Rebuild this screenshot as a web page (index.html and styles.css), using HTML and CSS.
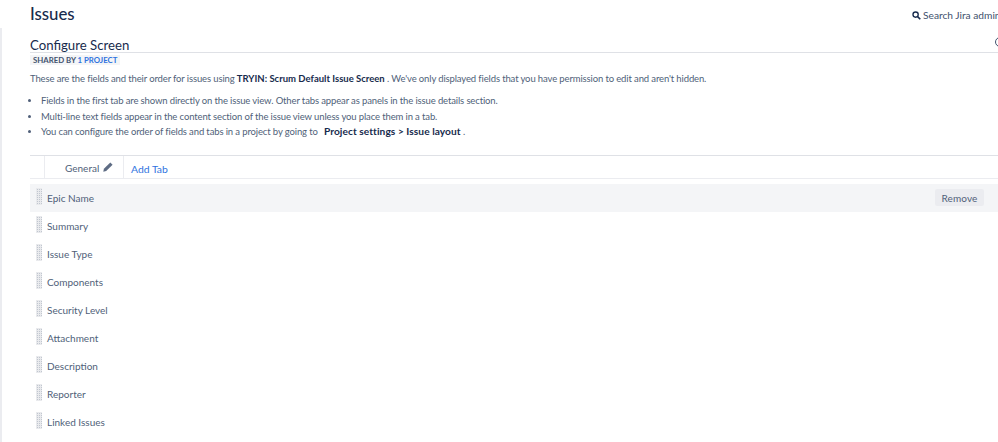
FILE: index.html
```html
<!DOCTYPE html>
<html lang="en">
<head>
<meta charset="utf-8">
<title>Configure Screen</title>
<link rel="stylesheet" href="styles.css">
</head>
<body>
<div class="shell">
  <aside class="rail"></aside>
  <main class="main">
    <header class="top">
      <h1 class="title">Issues</h1>
      <div class="search">
        <svg class="search-icon" width="9" height="9" viewBox="0 0 10 10" aria-hidden="true"><circle cx="4" cy="4" r="2.9" fill="none" stroke="#172b4d" stroke-width="1.5"/><path d="M6.2 6.2 9.2 9.2" stroke="#172b4d" stroke-width="1.8"/></svg>
        <span class="search-text">Search Jira admin</span>
      </div>
    </header>
    <section class="heading">
      <h2 class="subtitle">Configure Screen</h2>
      <span class="help"></span>
    </section>
    <div class="shared">SHARED BY <a class="shared-link">1 PROJECT</a></div>
    <p class="intro">These are the fields and their order for issues using <b>TRYIN: Scrum Default Issue Screen</b> . We've only displayed fields that you have permission to edit and aren't hidden.</p>
    <ul class="notes">
      <li>Fields in the first tab are shown directly on the issue view. Other tabs appear as panels in the issue details section.</li>
      <li>Multi-line text fields appear in the content section of the issue view unless you place them in a tab.</li>
      <li>You can configure the order of fields and tabs in a project by going to <b>Project settings &gt; Issue layout</b> .</li>
    </ul>
    <nav class="tabs">
      <div class="tab">General
        <svg class="pencil" width="10" height="10" viewBox="0 0 10 10" aria-hidden="true"><path d="M7.3.4 9.6 2.7 3.2 9.1.3 9.7.9 6.8Z" fill="#5e6c84"/></svg>
      </div>
      <a class="add-tab">Add Tab</a>
    </nav>
    <div class="fields">
      <div class="field field-active"><span class="grip"></span><span class="name">Epic Name</span><button class="remove">Remove</button></div>
      <div class="field"><span class="grip"></span><span class="name">Summary</span></div>
      <div class="field"><span class="grip"></span><span class="name">Issue Type</span></div>
      <div class="field"><span class="grip"></span><span class="name">Components</span></div>
      <div class="field"><span class="grip"></span><span class="name">Security Level</span></div>
      <div class="field"><span class="grip"></span><span class="name">Attachment</span></div>
      <div class="field"><span class="grip"></span><span class="name">Description</span></div>
      <div class="field"><span class="grip"></span><span class="name">Reporter</span></div>
      <div class="field"><span class="grip"></span><span class="name">Linked Issues</span></div>
    </div>
  </main>
</div>
</body>
</html>
```
FILE: styles.css
```css
* { box-sizing: border-box; }
html, body { margin: 0; height: 442px; overflow: hidden; background: #fff; }
body { font-family: "Lato", "Open Sans", sans-serif; font-size: 9.5px; letter-spacing: -0.13px; color: #505f79; }
.shell { display: flex; height: 442px; }
.rail { width: 2px; margin-top: 28px; background: #ebecf0; flex: none; }
.main { flex: 1; min-width: 0; padding-left: 28px; }
.top { display: flex; justify-content: space-between; height: 38px; }
.title { margin: 3px 0 0; font-size: 16.8px; line-height: 22px; font-weight: 500; letter-spacing: 0; color: #172b4d; }
.search { display: flex; align-items: center; gap: 2px; height: 14px; margin-top: 8px; white-space: nowrap; width: 86px; color: #42526e; font-size: 10.2px; letter-spacing: 0; flex: none; }
.search-icon { flex: none; }
.heading { display: flex; justify-content: space-between; align-items: flex-start; height: 15px; border-bottom: 1px solid #dfe1e6; }
.subtitle { margin: -1px 0 0; font-size: 13.2px; line-height: 16px; font-weight: 400; letter-spacing: 0; color: #172b4d; }
.help { width: 10px; height: 10px; margin: -1px -7px 0 0; border: 1.5px solid #42526e; border-radius: 50%; }
.shared { display: inline-block; margin-top: 2px; padding: 0 3px; height: 10px; line-height: 10px; font-size: 7.8px; font-weight: 700; letter-spacing: 0; background: #f4f5f7; color: #42526e; }
.shared-link { color: #2f73e0; }
.intro { margin: 7px 0 0; line-height: 14px; }
b { letter-spacing: 0; color: #172b4d; }
.intro b { font-size: 9.5px; }
.notes b { margin-left: 4px; font-size: 10.2px; letter-spacing: 0.05px; }
.notes { margin: 7px 0 0; padding: 0 0 0 11px; line-height: 15.5px; }
.tabs { display: flex; height: 24px; margin-top: 15px; border-top: 1px solid #dfe1e6; border-bottom: 1px solid #ebecf0; }
.tab { margin-left: 14px; width: 80px; padding: 2px 0 0 20px; line-height: 21px; font-size: 10px; letter-spacing: 0; border-left: 1px solid #ebecf0; border-right: 1px solid #ebecf0; }
.pencil { margin-left: 1px; }
.add-tab { padding: 2px 0 0 7px; line-height: 22px; font-size: 10.4px; letter-spacing: 0; color: #2f73e0; }
.fields { margin-top: 5px; }
.field { display: flex; align-items: center; height: 28px; padding: 0 14px 0 6px; font-size: 10px; letter-spacing: 0; }
.field-active { background: #f4f5f7; }
.grip { width: 6px; height: 17px; margin: -3px 5px 0 0; flex: none; background-color: #c1c7d0; background-image: linear-gradient(#e9eaed 1px, transparent 1px), linear-gradient(90deg, #e9eaed 1px, transparent 1px); background-size: 2px 2px; }
.name { flex: 1; padding-top: 1px; }
.remove { height: 17px; width: 49px; padding: 0; border: 0; border-radius: 2px; background: #ebecf0; color: #505f79; font: inherit; letter-spacing: 0.1px; }
```
